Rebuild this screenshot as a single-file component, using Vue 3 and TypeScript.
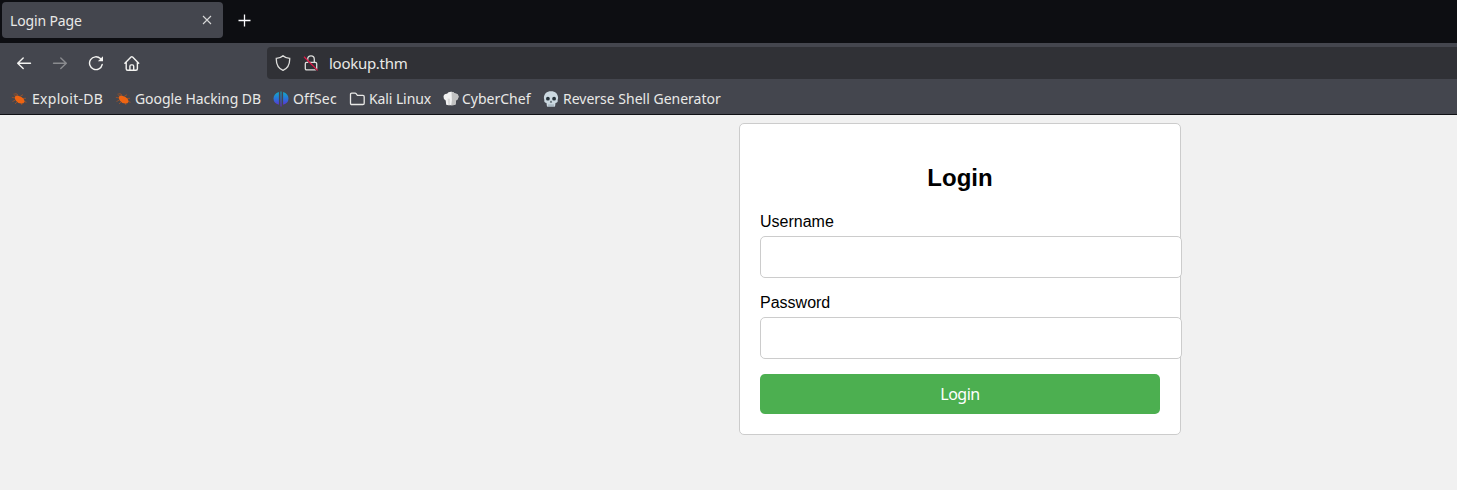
<script setup lang="ts">
import { ref } from 'vue'

interface Bookmark {
  label: string
  icon: 'bug' | 'offsec' | 'folder' | 'chef' | 'skull'
  key: string
}

const bookmarks: Bookmark[] = [
  { label: 'Exploit-DB', icon: 'bug', key: 'exploit' },
  { label: 'Google Hacking DB', icon: 'bug', key: 'ghdb' },
  { label: 'OffSec', icon: 'offsec', key: 'offsec' },
  { label: 'Kali Linux', icon: 'folder', key: 'kali' },
  { label: 'CyberChef', icon: 'chef', key: 'chef' },
  { label: 'Reverse Shell Generator', icon: 'skull', key: 'revshell' },
]

const username = ref('')
const password = ref('')
</script>

<template>
  <div class="window">
    <header class="tabs">
      <div class="tab">
        <span class="tab-title">Login Page</span>
        <svg class="close" width="10" height="10" viewBox="0 0 10 10"><path d="M1 1l8 8M9 1L1 9" /></svg>
      </div>
      <svg class="plus" width="13" height="13" viewBox="0 0 13 13"><path d="M6.500 .5v12M.5 6.500h12" /></svg>
    </header>

    <nav class="toolbar">
      <svg class="nav-icon" viewBox="0 0 16 16"><path d="M14.500 8.300H1.700M7.200 3L1.700 8.300l5.500 5.300" /></svg>
      <svg class="nav-icon dim" viewBox="0 0 16 16"><path d="M1.500 8.300h12.800M8.800 3l5.500 5.300-5.500 5.300" /></svg>
      <svg class="nav-icon" viewBox="0 0 16 16">
        <path d="M14.200 9.500A6.400 6.400 0 1 1 12.400 3.600" />
        <path class="solid" d="M15 1.200v5.100H9.900z" />
      </svg>
      <svg class="nav-icon" viewBox="0 0 16 16">
        <path d="M.9 8.300L7 2q.8-.7 1.600 0l6.100 6.300M2.200 7.200v6.600q0 1.500 1.500 1.500h8.200q1.500 0 1.500-1.500V7.200M5.900 15.200v-4q0-1.300 1.300-1.300h1.200q1.300 0 1.300 1.300v4" />
      </svg>
      <div class="url-bar">
        <svg class="url-icon" viewBox="0 0 16 16">
          <path d="M8 .8C6.400 2.400 3.800 3.300 1.300 3.400 1.100 8.500 2.800 13.100 8 15.400c5.200-2.300 6.900-6.900 6.700-12C12.200 3.300 9.600 2.400 8 .8z" />
        </svg>
        <svg class="url-icon lock" viewBox="0 0 16 16">
          <path d="M4.700 7.200V4.200a3.300 3.300 0 0 1 6.600 0v3M3.600 7.400h8.800q1.300 0 1.300 1.300v4.800q0 1.300-1.300 1.300H3.600q-1.300 0-1.300-1.300V8.700q0-1.300 1.300-1.300z" />
          <path class="gap" d="M1.200 2.900L14.200 15.900" />
          <path class="slash" d="M1 1.800L14.600 15.400" />
        </svg>
        <span class="address">lookup.thm</span>
      </div>
    </nav>

    <nav class="bookmarks">
      <a v-for="b in bookmarks" :key="b.key" class="bookmark" :class="b.key">
        <svg v-if="b.icon === 'bug'" class="mark" viewBox="0 0 16 16">
          <path class="bug-leg" d="M5 5.500L2.500 3.200M7 4.500L6 3 3.500 2.700M4 7L.8 6.300M4.500 9L1.500 10.500M6 11l-2 2M9.500 5l2.500-1.300M11.500 7.500l3.500-.2M10 12l1 2M13 10.500l2.500.8" />
          <path class="bug" d="M3.800 6Q5 4.200 7 4.700q3.600.4 5.300 2.900 1.300 1.200 1.200 3.100-.7 2-3 1.900-3.500-.1-5.300-2.600Q3.600 8.400 3.800 6z" />
        </svg>
        <svg v-else-if="b.icon === 'offsec'" class="mark" viewBox="0 0 16 16">
          <defs>
            <linearGradient id="offsec-fill" x1="0" y1="0" x2="0" y2="1">
              <stop offset="0" stop-color="#10adc4" />
              <stop offset=".5" stop-color="#2b70d9" />
              <stop offset="1" stop-color="#6b22d0" />
            </linearGradient>
          </defs>
          <path fill="url(#offsec-fill)" d="M5.900.9v12.900Q.6 12.300.5 7.500.7 2.500 5.900.9zM7.500.6h1v15h-1zM10.100.9q5.200 1.600 5.400 6.600-.1 4.800-5.400 6.300z" />
        </svg>
        <svg v-else-if="b.icon === 'folder'" class="mark folder" viewBox="0 0 16 16">
          <path d="M2.800 2.200h3.300q.6 0 1 .5l1.300 1.700h5.500q1.300 0 1.300 1.300v6.500q0 1.300-1.300 1.300H2.800q-1.300 0-1.300-1.300V3.500q0-1.300 1.300-1.300z" />
        </svg>
        <svg v-else-if="b.icon === 'chef'" class="mark" viewBox="0 0 16 16">
          <path fill="#f1f1f1" d="M3.200 13.800L2.700 9.500Q.3 8.500.5 5.500 1 2.400 4 2.700q1-2 4-2 2.600-.1 3.800 1.800 3.200-.1 3.700 3 0 3-2.500 4l-.5 4.100Q8 15 3.200 13.800z" />
          <path fill="#c1c1c1" d="M8.500.7q2.300.2 3.300 1.800 3.200-.1 3.700 3 0 3-2.500 4l-.5 4.100q-1.800.8-4.300.9l.7-5z" />
          <path fill="#d8d8d8" d="M4.600 7.500l.8 6.400 1.500.2V7.700z" />
        </svg>
        <svg v-else class="mark" viewBox="0 0 16 16">
          <path fill="#cbd8e0" d="M8 .2c4.400 0 7 2.700 7.100 6.600 0 1.200-.6 1.800-.4 3 .2 1.400-.9 2-2.200 2.100l-.4 3q-.2.900-1.300.900H5.200q-1.100 0-1.300-.9l-.4-3c-1.300-.1-2.400-.7-2.200-2.100.2-1.200-.4-1.800-.4-3C1 2.900 3.600.2 8 .2z" />
          <circle cx="4.900" cy="7.700" r="1.900" fill="#26323a" />
          <circle cx="11.100" cy="7.700" r="1.900" fill="#26323a" />
          <path fill="#35434b" d="M8 9.500l1.200 2H6.800z" />
          <path class="teeth" d="M6 13.300v2.500M8 13.300v2.500M10 13.300v2.500" />
        </svg>
        <span class="label">{{ b.label }}</span>
      </a>
    </nav>

    <main class="page">
      <form class="card" @submit.prevent>
        <h2>Login</h2>
        <label for="username">Username</label>
        <input id="username" v-model="username" type="text" />
        <label for="password">Password</label>
        <input id="password" v-model="password" type="password" />
        <button type="submit">Login</button>
      </form>
    </main>
  </div>
</template>

<style>
body {
  margin: 0;
  overflow: hidden;
}
</style>

<style scoped>
.window {
  width: 1457px;
  height: 490px;
  overflow: hidden;
  display: flex;
  flex-direction: column;
  background: #f1f1f1;
  color: #e9e9e7;
  font-family: "Noto Sans", sans-serif;
}
svg {
  display: block;
  flex: none;
  fill: none;
}
.tabs {
  height: 43px;
  box-sizing: border-box;
  padding: 2px 2px 5px;
  display: flex;
  align-items: center;
  background: #0d0e12;
}
.tab {
  width: 221px;
  height: 36px;
  box-sizing: border-box;
  padding: 0 11px 0 8px;
  display: flex;
  align-items: center;
  justify-content: space-between;
  border-radius: 4px;
  background: #44464e;
}
.tab-title {
  padding-top: 2px;
  font-size: 14px;
  line-height: 20px;
  letter-spacing: -0.15px;
}
.close {
  stroke: #d8d8d8;
  stroke-width: 1.1;
}
.plus {
  margin-left: 15px;
  stroke: #fbfbfe;
  stroke-width: 1.3;
}
.toolbar {
  height: 40px;
  padding-left: 16px;
  display: flex;
  align-items: center;
  gap: 20px;
  background: #44464e;
}
.nav-icon {
  width: 16px;
  height: 16px;
  stroke: #f3f3f1;
  stroke-width: 1.4;
  stroke-linecap: round;
  stroke-linejoin: round;
}
.nav-icon .solid {
  fill: #f3f3f1;
  stroke: none;
}
.dim {
  opacity: 0.4;
}
.url-bar {
  flex: 1;
  height: 32px;
  margin-left: 107px;
  padding-left: 8px;
  display: flex;
  align-items: center;
  border-radius: 4px 0 0 4px;
  background: #303136;
}
.url-icon {
  width: 16px;
  height: 16px;
  stroke: #dededc;
  stroke-width: 1.3;
}
.lock {
  margin-left: 12px;
}
.gap {
  stroke: #303136;
  stroke-width: 1;
}
.slash {
  stroke: #e01747;
  stroke-width: 1.3;
}
.address {
  margin-left: 10px;
  font-size: 15px;
  line-height: 20px;
  letter-spacing: -0.28px;
}
.bookmarks {
  height: 31px;
  padding-left: 11px;
  display: flex;
  align-items: center;
  background: #44464e;
  border-bottom: 1px solid #0f1014;
}
.bookmark {
  height: 16px;
  display: flex;
  align-items: center;
  gap: 4px;
  font-size: 14px;
  white-space: nowrap;
}
.label {
  line-height: 20px;
}
.mark {
  width: 16px;
  height: 16px;
}
.exploit {
  width: 104px;
  gap: 5px;
  letter-spacing: 0.28px;
}
.ghdb {
  width: 158px;
  letter-spacing: -0.07px;
}
.offsec {
  width: 76px;
  letter-spacing: 0.15px;
}
.kali {
  width: 94px;
  letter-spacing: -0.1px;
}
.chef {
  width: 100px;
  gap: 3px;
}
.bug {
  fill: #ee6412;
}
.bug-leg {
  stroke: #a55323;
  stroke-width: 0.8;
}
.folder {
  stroke: #e9e9e7;
  stroke-width: 1.3;
}
.teeth {
  stroke: #687b86;
  stroke-width: 0.6;
}
.page {
  flex: 1;
  padding: 8px 0 0 739px;
  font-family: "Liberation Sans", Arial, sans-serif;
  font-size: 16px;
  color: #000;
}
.card {
  width: 442px;
  height: 312px;
  box-sizing: border-box;
  padding: 20px;
  border: 1px solid #ccc;
  border-radius: 5px;
  background: #fff;
}
h2 {
  margin: 20px 0;
  font-size: 24px;
  line-height: 27px;
  text-align: center;
}
label {
  display: block;
  height: 22px;
  margin-bottom: 3px;
  line-height: 22px;
}
input {
  display: block;
  width: 422px;
  height: 42px;
  box-sizing: border-box;
  margin: 0 0 14px;
  padding: 10px;
  border: 1px solid #ccc;
  border-radius: 5px;
  background: #fff;
  outline: none;
}
button {
  display: block;
  width: 400px;
  height: 40px;
  margin-top: 15px;
  padding: 0;
  border: 0;
  border-radius: 5px;
  background: #4caf50;
  color: #fff;
  font-family: "Noto Sans", sans-serif;
  font-size: 16px;
  letter-spacing: -0.5px;
}
</style>
